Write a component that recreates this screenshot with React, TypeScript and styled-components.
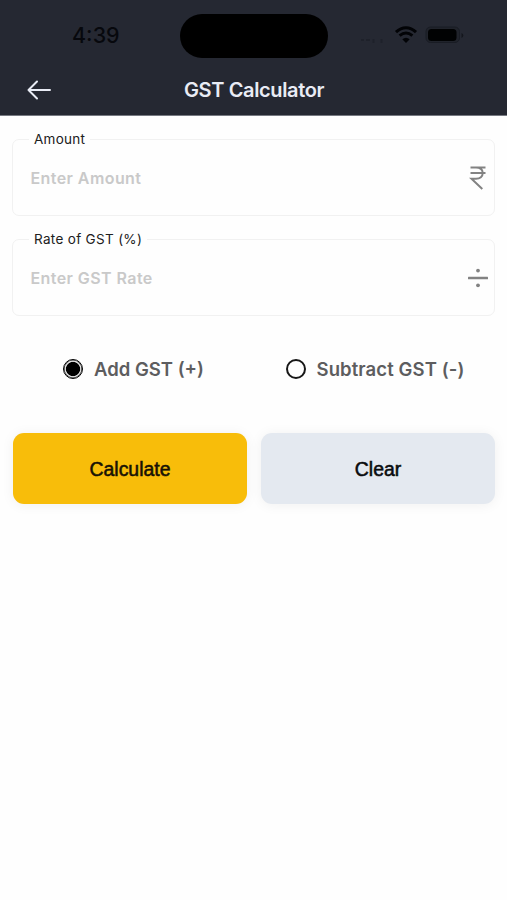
import React, { useState } from "react";
import styled, { createGlobalStyle } from "styled-components";

const GlobalStyle = createGlobalStyle`
  *, *::before, *::after { box-sizing: border-box; }
  body { margin: 0; background: #fefefe; font-family: Inter, "Liberation Sans", sans-serif; }
`;

const Screen = styled.div`
  width: 507px;
  height: 900px;
  background: #fefefe;
  overflow: hidden;
`;

const Header = styled.header`
  height: 116px;
  background: #252832;
  border-bottom: 1px solid #767981;
`;

const StatusBar = styled.div`
  display: grid;
  grid-template-columns: 180px 148px 1fr;
  height: 57px;
  padding-top: 14px;
`;

const Clock = styled.time`
  padding-left: 72px;
  font-size: 21.5px;
  font-weight: 500;
  line-height: 43px;
  color: #07080d;
`;

const Island = styled.div`
  height: 43.5px;
  border-radius: 22px;
  background: #000;
`;

const StatusIcons = styled.div`
  display: flex;
  height: 43px;
  padding-left: 32px;
`;

const TitleBar = styled.div`
  display: grid;
  grid-template-columns: 80px 1fr 80px;
  align-items: center;
  height: 58px;
  padding-top: 8px;
`;

const BackButton = styled.button`
  display: flex;
  padding: 0 0 0 26px;
  border: 0;
  background: none;
`;

const Title = styled.h1`
  margin: 0;
  padding-left: 1px;
  text-align: center;
  font-size: 20px;
  font-weight: 600;
  line-height: 26px;
  letter-spacing: -0.36px;
  color: #e9ecf5;
`;

const Form = styled.form`
  padding: 15px 12px 0 12px;
`;

const Field = styled.fieldset`
  display: block;
  min-width: 0;
  height: 85px;
  margin: 0 0 15px;
  padding: 0 5px 0 17px;
  border: 1px solid #f1f1f1;
  border-radius: 7px;
`;

const Legend = styled.legend<{ $spacing: number }>`
  height: 17px;
  margin-left: -1px;
  padding: 0 5px;
  font-size: 13.5px;
  font-weight: 400;
  line-height: 17px;
  letter-spacing: ${(p) => p.$spacing}px;
  color: #202020;
`;

const FieldRow = styled.div`
  display: flex;
  align-items: center;
  height: 59px;
`;

const Input = styled.input<{ $spacing: number }>`
  flex: 1;
  min-width: 0;
  height: 40px;
  padding: 0 0 0 0.5px;
  border: 0;
  outline: 0;
  background: transparent;
  font: 600 16px Inter, sans-serif;
  letter-spacing: ${(p) => p.$spacing}px;
  color: #333;
  &::placeholder { color: #c9c9c9; opacity: 1; }
`;

const Options = styled.div`
  display: grid;
  grid-template-columns: 222.5px 1fr;
  padding: 26px 0 0 51px;
`;

const Option = styled.label<{ $spacing?: number }>`
  display: flex;
  align-items: center;
  gap: 11px;
  height: 24px;
  font-size: 18.5px;
  font-weight: 600;
  letter-spacing: ${(p) => p.$spacing ?? 0}px;
  white-space: nowrap;
  color: #5d5d5f;
`;

const Radio = styled.input`
  appearance: none;
  flex: none;
  width: 20px;
  height: 20px;
  margin: 0;
  border: 2px solid #171717;
  border-radius: 50%;
  background: #fefefe;
  &:checked {
    border-width: 1px;
    background: radial-gradient(circle, #000 6.7px, #cacaca 7.3px, #eee 8px);
    border-color: #000;
    box-shadow: inset 0 0 0 0.6px #222;
  }
`;

const Actions = styled.div`
  display: grid;
  grid-template-columns: 1fr 1fr;
  gap: 14px;
  padding: 52px 0 0 1px;
`;

const ActionButton = styled.button<{ $primary?: boolean }>`
  height: 71px;
  padding: 1px 0 0;
  border: 0;
  border-radius: 11px;
  background: ${(p) => (p.$primary ? "#f8bd0a" : "#e4e9f0")};
  box-shadow: 0 1px 13px rgba(0, 0, 0, 0.06);
  font: 400 19.4px "Liberation Sans", sans-serif;
  -webkit-text-stroke: 0.55px currentColor;
  color: ${(p) => (p.$primary ? "#171205" : "#090b0e")};
`;

const Signal = () => (
  <svg width="28" height="43" viewBox="0 0 28 43" fill="none" stroke="#1e212a" strokeWidth="2">
    <path d="M1 26h3M6 26h4M13.5 25v4M21.5 25v4" />
  </svg>
);

const Wifi = () => (
  <svg width="32" height="43" viewBox="0 0 32 43" fill="none" stroke="#020306" strokeWidth="3">
    <path d="M8 18.2C14.2 12.2 21.8 12.2 28 18.2M11.6 21.7C15.7 18.2 20.3 18.2 24.4 21.7" />
    <path d="M14.3 25.3Q18 22.2 21.7 25.3L18 28.9Z" fill="#020306" stroke="none" />
  </svg>
);

const Battery = () => (
  <svg width="48" height="43" viewBox="0 0 48 43">
    <rect x="6" y="13" width="33.5" height="15.5" rx="4.5" fill="#20232b" stroke="#191c24" />
    <rect x="8" y="15" width="28.5" height="12" rx="3.5" fill="#010203" />
    <path d="M41.5 19v5q1.8-.8 1.8-2.5t-1.8-2.5" fill="#14161d" />
  </svg>
);

const BackArrow = () => (
  <svg width="27" height="22" viewBox="0 0 27 22" fill="none" stroke="#e9ecf5" strokeWidth="2" strokeLinecap="round" strokeLinejoin="round">
    <path d="M24 11H2.5M11 2.5L2.5 11L11 19.5" />
  </svg>
);

const Rupee = () => (
  <svg width="20" height="28" viewBox="0 0 20 28" fill="none" stroke="#828282" strokeWidth="2">
    <path d="M1.5 3.5H16.5M1.5 9H16.5M1.5 3.5H7C11.5 3.5 13.7 5.8 13.7 9C13.7 12.5 11.1 14.8 7 14.8H2.5L13.3 25" />
  </svg>
);

const Divide = () => (
  <svg width="22" height="22" viewBox="0 0 22 22" fill="#828282">
    <rect x="1" y="9.7" width="20" height="2.5" rx=".5" />
    <circle cx="11" cy="3.6" r="1.9" />
    <circle cx="11" cy="18.3" r="1.9" />
  </svg>
);

export default function App() {
  const [mode, setMode] = useState("add");
  return (
    <>
      <GlobalStyle />
      <Screen>
        <Header>
          <StatusBar>
            <Clock>4:39</Clock>
            <Island />
            <StatusIcons>
              <Signal />
              <Wifi />
              <Battery />
            </StatusIcons>
          </StatusBar>
          <TitleBar>
            <BackButton aria-label="Back"><BackArrow /></BackButton>
            <Title>GST Calculator</Title>
          </TitleBar>
        </Header>
        <Form onSubmit={(e) => e.preventDefault()}>
          <Field>
            <Legend $spacing={0.27}>Amount</Legend>
            <FieldRow>
              <Input $spacing={0.42} placeholder="Enter Amount" inputMode="decimal" />
              <Rupee />
            </FieldRow>
          </Field>
          <Field>
            <Legend $spacing={0.32}>Rate of GST (%)</Legend>
            <FieldRow>
              <Input $spacing={0.42} placeholder="Enter GST Rate" inputMode="decimal" />
              <Divide />
            </FieldRow>
          </Field>
          <Options>
            <Option>
              <Radio type="radio" name="mode" checked={mode === "add"} onChange={() => setMode("add")} />
              Add GST (+)
            </Option>
            <Option $spacing={0.1}>
              <Radio type="radio" name="mode" checked={mode === "subtract"} onChange={() => setMode("subtract")} />
              Subtract GST (-)
            </Option>
          </Options>
          <Actions>
            <ActionButton $primary type="submit">Calculate</ActionButton>
            <ActionButton type="reset">Clear</ActionButton>
          </Actions>
        </Form>
      </Screen>
    </>
  );
}
